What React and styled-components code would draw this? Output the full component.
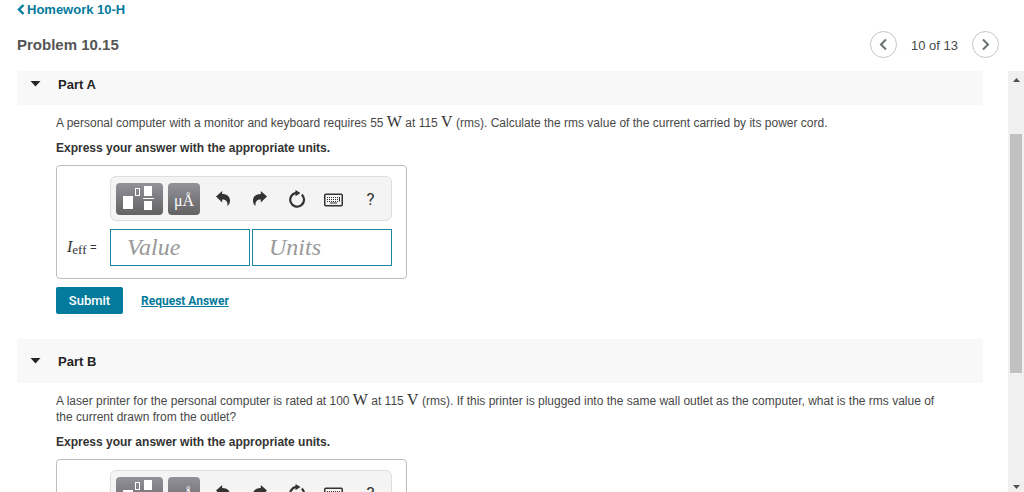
import {useState} from "react";
import styled, {createGlobalStyle} from "styled-components";

const GlobalStyle = createGlobalStyle`
    * {
        box-sizing: border-box;
    }
    body {
        margin: 0;
        background-color: #ffffff;
        color: #484848;
        font-family: "Liberation Sans", Arial, sans-serif;
        font-size: 12px;
        line-height: 16px;
    }
    button, input {
        font-family: inherit;
        padding: 0;
        border: none;
        background: none;
    }
    button {
        cursor: pointer;
    }
`

const AppWrapper = styled.div`
    height: 100vh;
    display: flex;
    flex-direction: column;
    overflow: hidden;
`

const Header = styled.header`
    flex: none;
    padding: 0 25px 13px 17px;
`

const BackLink = styled.a`
    display: flex;
    align-items: center;
    gap: 2px;
    width: fit-content;
    height: 19px;
    color: #047a9c;
    font-size: 13px;
    font-weight: bold;
    text-decoration: none;
`

const TitleRow = styled.div`
    display: flex;
    justify-content: space-between;
    align-items: center;
    margin-top: 12px;
`

const Title = styled.h1`
    margin: 0;
    font-size: 15px;
    color: #555555;
`

const Pager = styled.nav`
    display: flex;
    align-items: center;
    gap: 14px;
    font-size: 13px;
`

const PagerText = styled.span`
    padding-top: 3px;
`

const RoundButton = styled.button`
    display: flex;
    align-items: center;
    justify-content: center;
    width: 27px;
    height: 27px;
    border: 1px solid #c4c4c4;
    border-radius: 50%;
`

const Viewport = styled.div`
    flex: 1;
    min-height: 0;
    display: flex;
    gap: 25px;
    padding-left: 17px;
`

const Parts = styled.main`
    flex: 1;
    min-width: 0;
    overflow: hidden;
`

const PartHeader = styled.h2`
    display: flex;
    margin: 0;
    padding: ${props => props.$scrolled ? '5px 0 13px 13px' : '14px 0 14px 13px'};
    background-color: #f8f8f8;
`

const PartToggle = styled.button`
    display: flex;
    align-items: center;
    gap: 17px;
    height: 16px;
    color: #252525;
    font-size: 13px;
    font-weight: bold;
`

const PartBody = styled.div`
    display: flex;
    flex-direction: column;
    align-items: flex-start;
    gap: 9px;
    padding: 10px 40px 25px 39px;
`

const Text = styled.p`
    margin: 0;
    font-weight: ${props => props.$bold ? 'bold' : 'normal'};
    color: ${props => props.$bold ? '#333333' : '#484848'};
`

const Unit = styled.span`
    font-family: "Liberation Serif", "Times New Roman", serif;
    font-size: 16px;
    line-height: 1px;
    color: #333333;
`

const AnswerForm = styled.form`
    display: flex;
    flex-direction: column;
    gap: 8px;
    font-family: Roboto, Arial, sans-serif;
`

const AnswerBox = styled.div`
    display: grid;
    grid-template-columns: 43px 282px;
    row-gap: 8px;
    padding: 10px 14px 12px 10px;
    border: 1px solid #bdbdbd;
    border-radius: 4px;
`

const Toolbar = styled.div`
    grid-column: 2;
    display: flex;
    align-items: center;
    height: 45px;
    padding-left: 5px;
    background-color: #f4f4f4;
    border: 1px solid #dedede;
    border-radius: 6px;
`

const DarkButton = styled.button`
    display: flex;
    align-items: center;
    justify-content: center;
    width: ${props => props.$wide ? 47 : 32}px;
    height: 32px;
    margin-right: ${props => props.$wide ? 5 : 4}px;
    padding-top: ${props => props.$wide ? 0 : 4}px;
    border-radius: 4px;
    background: linear-gradient(#93929b, #626262);
    color: #ffffff;
    font-family: "Liberation Serif", "Times New Roman", serif;
    font-size: 16px;
`

const ToolButton = styled.button`
    display: flex;
    align-items: center;
    justify-content: center;
    width: 37px;
    height: 32px;
    color: #333333;
    font-size: 17px;
`

const AnswerLabel = styled.label`
    align-self: center;
    font-size: 13px;
    white-space: nowrap;
    color: #333333;
`

const Variable = styled.i`
    font-family: "Liberation Serif", "Times New Roman", serif;
    font-size: 16px;
`

const Subscript = styled.sub`
    font-family: "Liberation Serif", "Times New Roman", serif;
    font-size: 13px;
    line-height: 1px;
    vertical-align: -2px;
`

const Fields = styled.div`
    display: flex;
    gap: 2px;
`

const Field = styled.input`
    flex: 1;
    min-width: 0;
    height: 37px;
    padding: 0 16px;
    border: 1px solid #1a86a5;
    background-color: #ffffff;
    font-family: "Liberation Serif", "Times New Roman", serif;
    font-size: 24px;
    &::placeholder {
        color: #999999;
        font-style: italic;
        opacity: 1;
    }
`

const Actions = styled.div`
    display: flex;
    align-items: center;
    gap: 18px;
`

const SubmitButton = styled.button`
    width: 67px;
    height: 27px;
    border-radius: 2px;
    background-color: #047a9c;
    color: #ffffff;
    font-size: 13px;
    font-weight: 500;
`

const RequestLink = styled.a`
    color: #047a9c;
    font-size: 12px;
    font-weight: bold;
`

const Scrollbar = styled.div`
    flex: none;
    display: flex;
    flex-direction: column;
    align-items: center;
    width: 16px;
    padding: 7px 0 3px;
    background-color: #f0f0f0;
`

const ScrollTrack = styled.div`
    flex: 1;
    width: 12px;
    margin: 52px 0 0;
`

const ScrollThumb = styled.div`
    height: 68%;
    background-color: #c1c1c1;
`

function Chevron({right}) {
    return (
      <svg width="9" height="13" viewBox="0 0 9 13" fill="none" stroke="#6a7070" strokeWidth="2">
        <path d={right ? "M2 1.5 7 6.5 2 11.5" : "M7 1.5 2 6.5 7 11.5"}/>
      </svg>
    );
}

function Caret({up}) {
    return (
      <svg width="7" height="4" viewBox="0 0 7 4" fill="#505050">
        <path d={up ? "M0 4 3.5 0 7 4Z" : "M0 0 3.5 4 7 0Z"}/>
      </svg>
    );
}

function TemplatesIcon() {
    return (
      <svg width="33" height="26" viewBox="0 0 33 26" fill="#ffffff">
        <rect x="0" y="10" width="10" height="13"/>
        <rect x="12.5" y="2.5" width="4" height="7" fill="none" stroke="#ffffff"/>
        <rect x="21" y="0" width="8" height="10"/>
        <rect x="20" y="12" width="11" height="1"/>
        <rect x="21" y="15" width="8" height="9"/>
      </svg>
    );
}

function ArrowIcon({redo}) {
    return (
      <svg width="14" height="15" viewBox="0 0 14 15" fill="currentColor">
        <path
            transform={redo ? "matrix(-1 0 0 1 14 0)" : undefined}
            d="M0 5.5 6.2 0V3C11 3 14 5.5 14 9.5C14 12 13 13.6 11.5 15C11.8 11 10.5 8.6 6.2 8.6V11.4Z"
        />
      </svg>
    );
}

function ResetIcon() {
    return (
      <svg width="18" height="18" viewBox="0 0 18 18" fill="none">
        <path d="M13.8 4.6A6.9 6.9 0 1 1 8 2.9" stroke="currentColor" strokeWidth="2.2"/>
        <path d="M7.5 0 12.5 3.1 7.5 6.2Z" fill="currentColor"/>
      </svg>
    );
}

function KeyboardIcon() {
    return (
      <svg width="19" height="16" viewBox="0 0 19 16" fill="none" stroke="currentColor">
        <rect x="0.75" y="3.25" width="17.5" height="11.5" rx="1" strokeWidth="1.5"/>
        <path d="M3 6.5H14M3 8.5H14M3 10.5H14" strokeDasharray="1 1"/>
        <path d="M15.5 6V10.5M6 12H13"/>
      </svg>
    );
}

function Answer({id}) {
    return (
      <AnswerForm onSubmit={e => e.preventDefault()}>
        <AnswerBox>
          <Toolbar role="toolbar" aria-label="Math tools">
            <DarkButton type="button" $wide aria-label="Templates"><TemplatesIcon/></DarkButton>
            <DarkButton type="button" aria-label="Unit symbols">μÅ</DarkButton>
            <ToolButton type="button" aria-label="Undo"><ArrowIcon/></ToolButton>
            <ToolButton type="button" aria-label="Redo"><ArrowIcon redo/></ToolButton>
            <ToolButton type="button" aria-label="Reset"><ResetIcon/></ToolButton>
            <ToolButton type="button" aria-label="Keyboard shortcuts"><KeyboardIcon/></ToolButton>
            <ToolButton type="button" aria-label="Help">?</ToolButton>
          </Toolbar>
          <AnswerLabel htmlFor={`${id}-value`}>
            <Variable>I</Variable><Subscript>eff</Subscript> =
          </AnswerLabel>
          <Fields>
            <Field id={`${id}-value`} placeholder="Value"/>
            <Field aria-label="Units" placeholder="Units"/>
          </Fields>
        </AnswerBox>
        <Actions>
          <SubmitButton type="submit">Submit</SubmitButton>
          <RequestLink href="#request">Request Answer</RequestLink>
        </Actions>
      </AnswerForm>
    );
}

function Part({id, title, scrolled, children}) {
    const [open, setOpen] = useState(true);
    return (
      <section>
        <PartHeader $scrolled={scrolled}>
          <PartToggle type="button" aria-expanded={open} onClick={() => setOpen(!open)}>
            <svg width="11" height="6" viewBox="0 0 11 6" fill="currentColor">
              <path d="M0.5 0H10.5L5.5 5.5Z"/>
            </svg>
            {title}
          </PartToggle>
        </PartHeader>
        {open &&
          <PartBody>
            <Text>{children}</Text>
            <Text $bold>Express your answer with the appropriate units.</Text>
            <Answer id={id}/>
          </PartBody>
        }
      </section>
    );
}

function App() {
    return (
      <AppWrapper>
        <GlobalStyle/>
        <Header>
          <BackLink href="#homework">
            <svg width="8" height="11" viewBox="0 0 8 11" fill="none" stroke="currentColor" strokeWidth="2.4">
              <path d="M6.5 1 2 5.5 6.5 10"/>
            </svg>
            Homework 10-H
          </BackLink>
          <TitleRow>
            <Title>Problem 10.15</Title>
            <Pager aria-label="Problems">
              <RoundButton aria-label="Previous"><Chevron/></RoundButton>
              <PagerText>10 of 13</PagerText>
              <RoundButton aria-label="Next"><Chevron right/></RoundButton>
            </Pager>
          </TitleRow>
        </Header>
        <Viewport>
          <Parts>
            <Part id="part-a" title="Part A" scrolled>
              A personal computer with a monitor and keyboard requires 55 <Unit>W</Unit> at 115 <Unit>V</Unit> (rms).
              Calculate the rms value of the current carried by its power cord.
            </Part>
            <Part id="part-b" title="Part B">
              A laser printer for the personal computer is rated at 100 <Unit>W</Unit> at 115 <Unit>V</Unit> (rms).
              If this printer is plugged into the same wall outlet as the computer, what is the rms value of
              the current drawn from the outlet?
            </Part>
          </Parts>
          <Scrollbar aria-hidden="true">
            <Caret up/>
            <ScrollTrack><ScrollThumb/></ScrollTrack>
            <Caret/>
          </Scrollbar>
        </Viewport>
      </AppWrapper>
    );
}

export default App;
